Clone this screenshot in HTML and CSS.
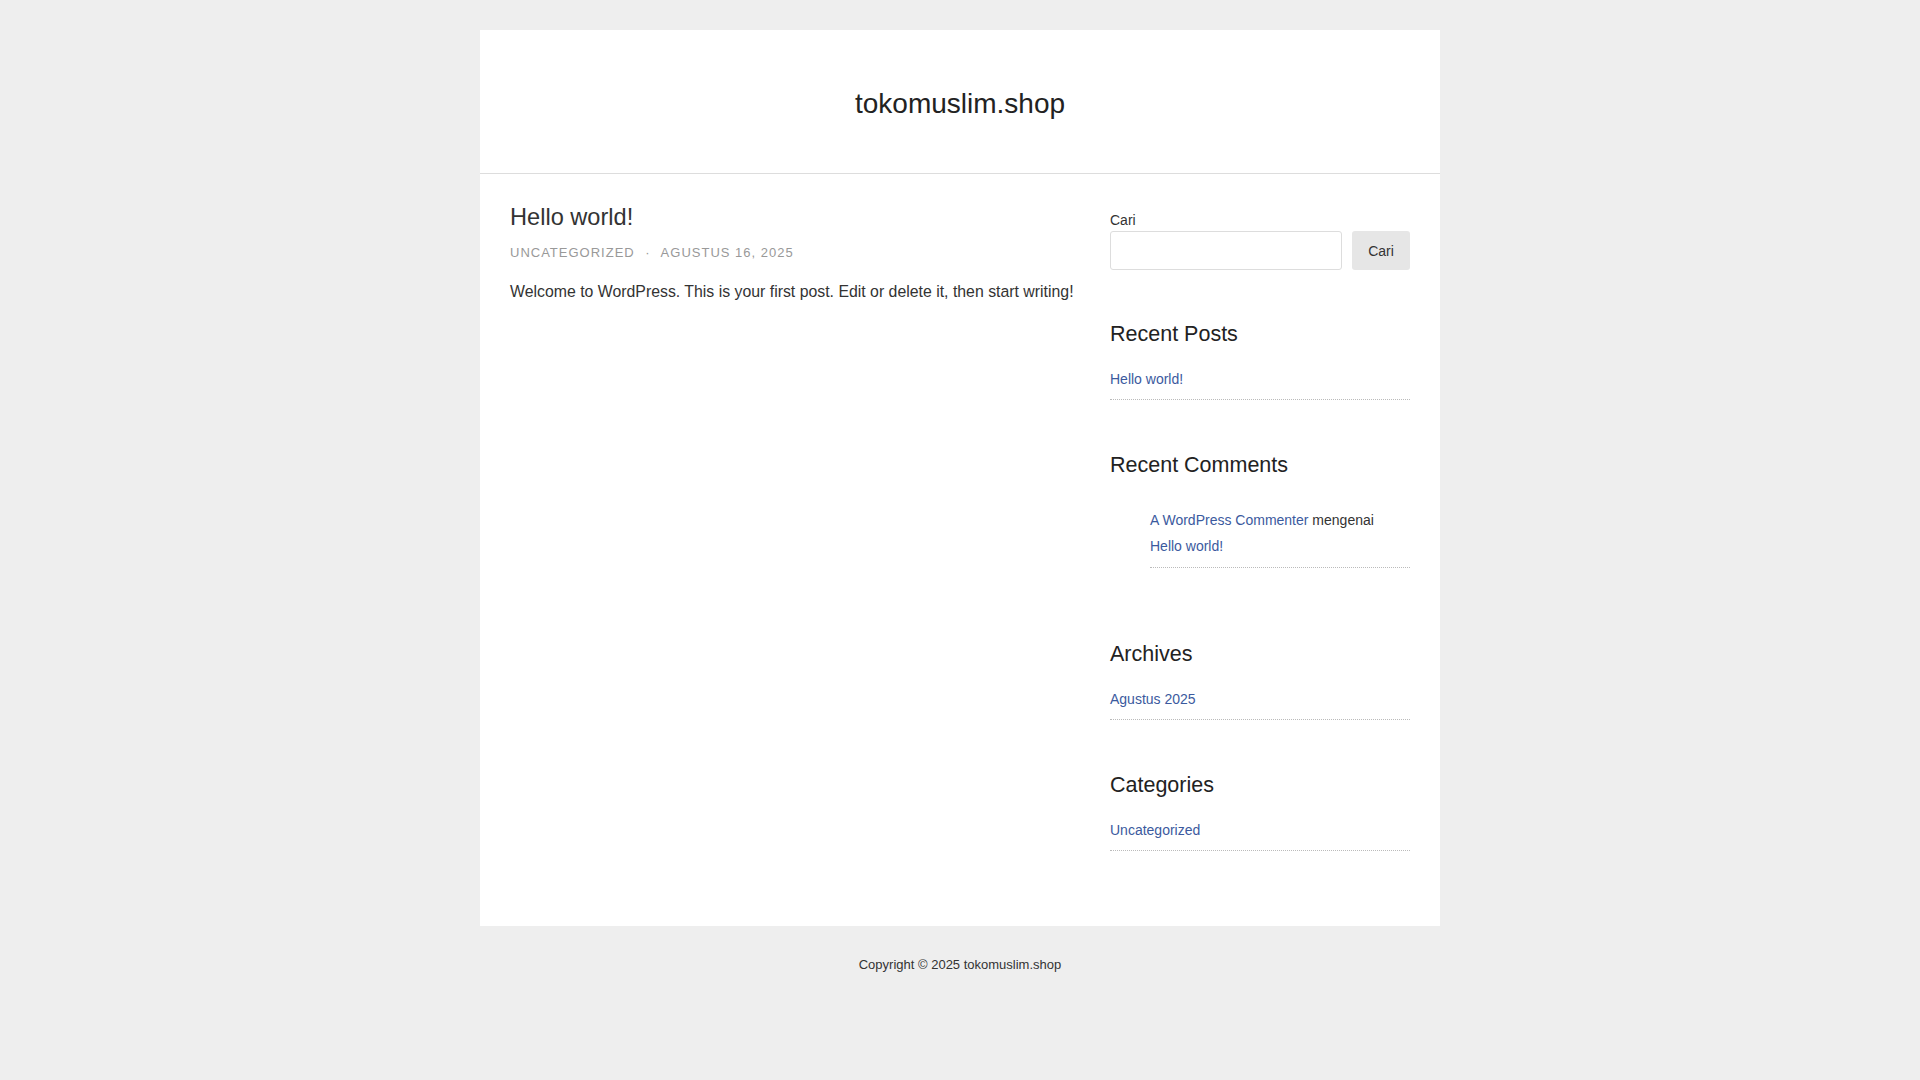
FILE: index.html
```html
<!DOCTYPE html>
<html lang="id">
<head>
    <meta charset="UTF-8">
    <meta name="viewport" content="width=device-width, initial-scale=1.0">
    <title>tokomuslim.shop</title>
    <link rel="stylesheet" href="styles.css">
</head>
<body>
    <div class="site">
        <header class="site-header">
            <h1 class="site-title">tokomuslim.shop</h1>
        </header>

        <div class="site-content">
            <main class="content">
                <article class="post">
                    <h2 class="post-title">Hello world!</h2>
                    <div class="post-meta">
                        <span>Uncategorized</span>
                        <span class="sep">&middot;</span>
                        <span>Agustus 16, 2025</span>
                    </div>
                    <p class="post-body">Welcome to WordPress. This is your first post. Edit or delete it, then start writing!</p>
                </article>
            </main>

            <aside class="sidebar">
                <form class="widget search-widget">
                    <label class="search-label">Cari</label>
                    <div class="search-row">
                        <input class="search-input" type="text">
                        <button class="search-button" type="button">Cari</button>
                    </div>
                </form>

                <section class="widget">
                    <h3 class="widget-title">Recent Posts</h3>
                    <ul class="widget-list">
                        <li><a href="#">Hello world!</a></li>
                    </ul>
                </section>

                <section class="widget widget-comments">
                    <h3 class="widget-title">Recent Comments</h3>
                    <ul class="widget-list comment-list">
                        <li><a href="#">A WordPress Commenter</a> mengenai <a href="#">Hello world!</a></li>
                    </ul>
                </section>

                <section class="widget">
                    <h3 class="widget-title">Archives</h3>
                    <ul class="widget-list">
                        <li><a href="#">Agustus 2025</a></li>
                    </ul>
                </section>

                <section class="widget">
                    <h3 class="widget-title">Categories</h3>
                    <ul class="widget-list">
                        <li><a href="#">Uncategorized</a></li>
                    </ul>
                </section>
            </aside>
        </div>
    </div>

    <footer class="site-footer">
        Copyright &copy; 2025 tokomuslim.shop
    </footer>
</body>
</html>
```

FILE: styles.css
```css
body {
    margin: 0;
    background-color: #eeeeee;
    font-family: "Liberation Sans", Arial, sans-serif;
    color: #333;
}
a {
    color: #3b5a9e;
    text-decoration: none;
}
.site {
    width: 960px;
    margin: 30px auto 0;
    background: white;
}
.site-header {
    padding: 58px 0 53px;
    border-bottom: 1px solid #dddddd;
    text-align: center;
}
.site-title {
    margin: 0;
    font-size: 28px;
    font-weight: normal;
    line-height: 32px;
    color: #222;
}
.site-content {
    display: grid;
    grid-template-columns: 1fr 300px;
    gap: 30px;
    padding: 0 30px 23px;
}
.content {
    padding-top: 29px;
}
.post-title {
    margin: 0;
    font-size: 23.6px;
    font-weight: normal;
    line-height: 28px;
    color: #333;
}
.post-meta {
    margin-top: 12px;
    font-size: 13px;
    line-height: 20px;
    letter-spacing: 1px;
    text-transform: uppercase;
    color: #999;
}
.post-meta .sep {
    margin: 0 6px;
}
.post-body {
    margin: 17px 0 0;
    font-size: 15.85px;
    line-height: 24px;
}
.sidebar {
    padding-top: 36px;
}
.widget {
    margin-bottom: 52px;
}
.search-widget {
    margin-bottom: 51px;
}
.search-label {
    display: block;
    font-size: 14px;
    line-height: 20px;
}
.search-row {
    display: flex;
    gap: 10px;
    margin-top: 1px;
}
.search-input {
    flex: 1;
    height: 39px;
    box-sizing: border-box;
    border: 1px solid #dddddd;
    border-radius: 3px;
    background: white;
    font-family: inherit;
}
.search-button {
    width: 58px;
    height: 39px;
    border: none;
    border-radius: 3px;
    background: #e6e6e6;
    font-family: inherit;
    font-size: 14px;
    color: #333;
}
.widget-title {
    margin: 0 0 20px;
    font-size: 21.5px;
    font-weight: normal;
    line-height: 26px;
    color: #222;
}
.widget-list {
    margin: 0;
    padding: 0;
    list-style: none;
}
.widget-list li {
    font-size: 14px;
    line-height: 24px;
    padding-bottom: 8px;
    border-bottom: 1px dotted #bbbbbb;
}
.widget-comments {
    margin-bottom: 73px;
}
.comment-list {
    margin-top: 29px;
    padding-left: 40px;
}
.comment-list li {
    line-height: 26px;
    padding-right: 24px;
    padding-bottom: 8px;
}
.site-footer {
    padding: 29px 0;
    text-align: center;
    font-size: 13px;
    line-height: 20px;
    color: #333;
}
```
